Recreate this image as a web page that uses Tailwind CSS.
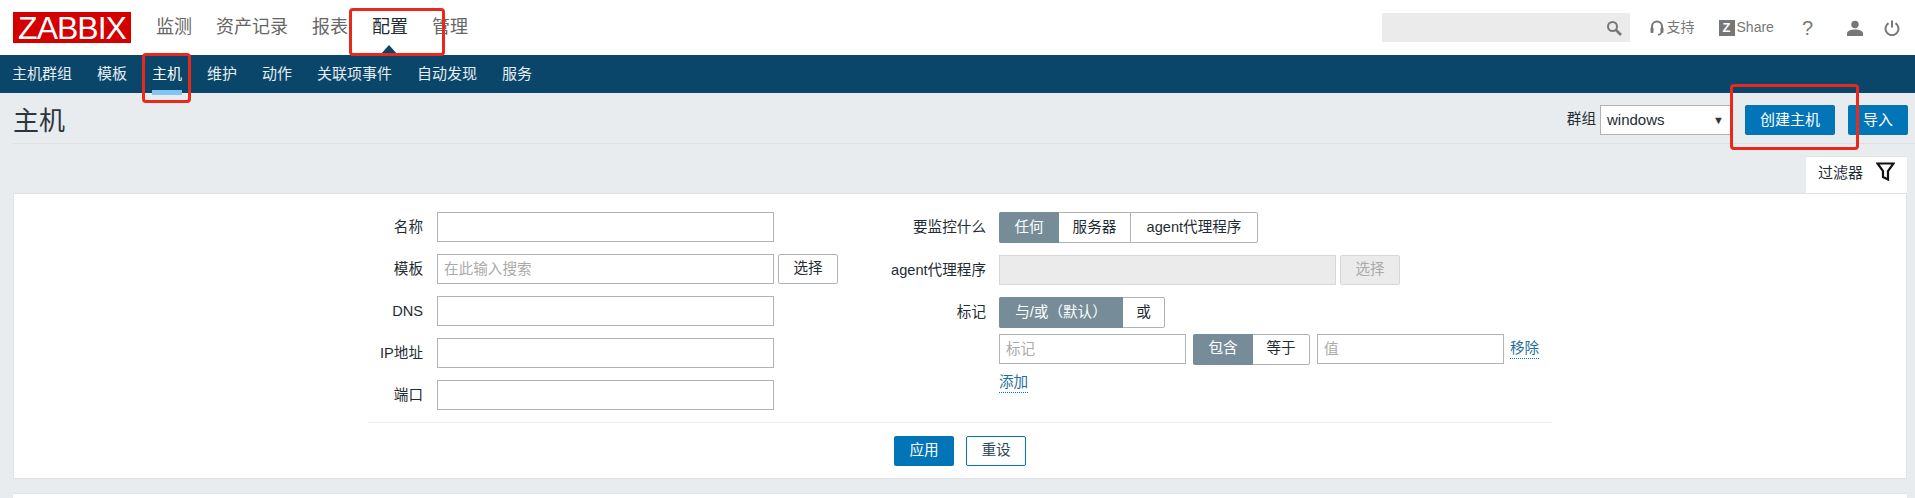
<!DOCTYPE html>
<html lang="zh-CN">
<head>
    <meta charset="UTF-8">
    <meta name="viewport" content="width=device-width, initial-scale=1.0">
    <title>主机</title>
    <script src="https://cdn.jsdelivr.net/npm/@tailwindcss/browser@4"></script>
</head>
<body class="relative h-[498px] overflow-hidden bg-[#e9ecef] text-[14.6px] text-[#1f2c33] font-['Liberation_Sans','Noto_Sans_CJK_SC',sans-serif]">

    <!-- Top bar -->
    <header class="relative flex h-[55px] items-center bg-white pl-[13px] pr-[15px]">
        <div class="flex h-[31px] w-[118px] items-center justify-center bg-[#d40000] text-[32px] tracking-[-1px] text-white">ZABBIX</div>
        <nav class="ml-[25px] flex gap-[24px] text-[18px] text-[#666]">
            <a>监测</a>
            <a>资产记录</a>
            <a>报表</a>
            <a class="text-[#1f2c33]">配置</a>
            <a>管理</a>
        </nav>
        <div class="absolute bottom-0 left-[380px] h-0 w-0 border-x-[9px] border-b-[10px] border-x-transparent border-b-[#0a466a]"></div>

        <div class="ml-auto flex h-[29px] w-[248px] items-center justify-end bg-[#ebebeb] pr-[8px]">
            <svg class="h-[16px] w-[16px] text-[#777]" viewBox="0 0 16 16" fill="none" stroke="currentColor">
                <circle cx="6.5" cy="6.5" r="4.5" stroke-width="2"/>
                <path d="M10 10l5 5" stroke-width="2.6"/>
            </svg>
        </div>
        <div class="ml-[20px] flex items-center text-[14px] text-[#777]">
            <svg class="h-[16px] w-[14px]" viewBox="0 0 14 16" fill="none" stroke="currentColor" stroke-width="2">
                <path d="M2 9V6.5a5 5 0 0 1 10 0V9"/>
                <rect x="0.5" y="7.5" width="3" height="5.500" rx="1" fill="currentColor" stroke="none"/>
                <rect x="10.5" y="7.5" width="3" height="5.500" rx="1" fill="currentColor" stroke="none"/>
                <path d="M11.5 12.5q-.5 2-3.500 2.200" stroke-width="1.500"/>
            </svg>
            <span class="ml-[3px]">支持</span>
        </div>
        <div class="ml-[24px] flex items-center text-[14px] text-[#777]">
            <span class="flex h-[16px] w-[16px] items-center justify-center bg-[#777] text-[13px] leading-none font-bold text-white">Z</span>
            <span class="ml-[2px]">Share</span>
        </div>
        <span class="ml-[28px] text-[20px] text-[#777]">?</span>
        <svg class="ml-[34px] h-[16px] w-[16px] text-[#777]" viewBox="0 0 16 16" fill="currentColor">
            <circle cx="8" cy="4.5" r="3.7"/>
            <path d="M0 16v-2.5C0 10.800 4 9.600 8 9.600s8 1.200 8 3.900V16z"/>
        </svg>
        <svg class="ml-[21px] h-[16px] w-[16px] text-[#777]" viewBox="0 0 16 16" fill="none" stroke="currentColor" stroke-width="2">
            <path d="M4.500 3.200a6.500 6.500 0 1 0 7 0"/>
            <path d="M8 0.500v7"/>
        </svg>
    </header>

    <!-- Second level nav -->
    <nav class="flex h-[38px] items-center gap-[25px] bg-[#0a466a] pl-[12px] text-[15px] text-[#e6eef3]">
        <a>主机群组</a>
        <a>模板</a>
        <a class="relative text-white">主机<span class="absolute -bottom-[10px] left-0 h-[5px] w-full bg-[#7fc4f5]"></span></a>
        <a>维护</a>
        <a>动作</a>
        <a>关联项事件</a>
        <a>自动发现</a>
        <a>服务</a>
    </nav>

    <!-- Page header -->
    <div class="ml-[13px] flex h-[51px] items-center justify-between border-b border-[#dde1e4] pt-[4px] pr-[7px]">
        <h1 class="mt-[2px] text-[26px] leading-none font-normal text-[#2b353b]">主机</h1>
        <div class="flex items-center">
            <span class="mr-[4px]">群组</span>
            <div class="flex h-[30px] w-[131px] items-center justify-between border border-[#b0b4b7] bg-white px-[6px] text-[15px]">
                <span>windows</span>
                <span class="text-[11px] text-[#333]">▼</span>
            </div>
            <button class="ml-[14px] h-[30px] w-[90px] rounded-[2px] bg-[#0275b8] text-[15px] text-white">创建主机</button>
            <button class="ml-[13px] h-[30px] w-[60px] rounded-[2px] bg-[#0275b8] text-[15px] text-white">导入</button>
        </div>
    </div>

    <!-- Filter tab -->
    <div class="mt-[12px] mr-[8px] flex justify-end">
        <div class="flex h-[37px] w-[101px] items-start justify-between border-t border-[#dfe3e6] bg-white pt-[5px] pr-[12px] pl-[12px] text-[15px]">
            <span>过滤器</span>
            <svg class="h-[19px] w-[19px] text-[#111]" viewBox="0 0 19 19" fill="none" stroke="currentColor" stroke-width="2.200">
                <path d="M1.500 1.500h16L12 9v8.500l-5-2.500V9z"/>
            </svg>
        </div>
    </div>

    <!-- Filter card -->
    <section class="mr-[8px] ml-[13px] h-[286px] border border-[#dfe3e6] bg-white">
        <div class="flex h-[228px] pt-[18px] pl-[354px]">

            <div class="flex w-[502px] flex-col gap-[12px]">
                <div class="flex h-[30px] items-center">
                    <label class="w-[55px] pt-[1px] text-right">名称</label>
                    <input class="ml-[14px] h-[30px] w-[337px] border border-[#b0b4b7] bg-white">
                </div>
                <div class="flex h-[30px] items-center">
                    <label class="w-[55px] pt-[1px] text-right">模板</label>
                    <input class="ml-[14px] h-[30px] w-[337px] border border-[#b0b4b7] bg-white px-[6px] placeholder:text-[#aaa]" placeholder="在此输入搜索">
                    <button class="ml-[4px] h-[30px] w-[60px] rounded-[2px] border border-[#b0b4b7] bg-white">选择</button>
                </div>
                <div class="flex h-[30px] items-center">
                    <label class="w-[55px] pt-[1px] text-right">DNS</label>
                    <input class="ml-[14px] h-[30px] w-[337px] border border-[#b0b4b7] bg-white">
                </div>
                <div class="flex h-[30px] items-center">
                    <label class="w-[55px] shrink-0 pt-[1px] text-right whitespace-nowrap">IP地址</label>
                    <input class="ml-[14px] h-[30px] w-[337px] border border-[#b0b4b7] bg-white">
                </div>
                <div class="flex h-[30px] items-center">
                    <label class="w-[55px] pt-[1px] text-right">端口</label>
                    <input class="ml-[14px] h-[30px] w-[337px] border border-[#b0b4b7] bg-white">
                </div>
            </div>

            <div class="flex flex-col">
                <div class="flex h-[31px] items-center">
                    <label class="w-[116px] pt-[1px] text-right">要监控什么</label>
                    <div class="ml-[13px] flex h-[31px] rounded-[2px] border border-[#b0b4b7]">
                        <span class="-my-[1px] -ml-[1px] flex w-[60px] items-center justify-center rounded-l-[2px] bg-[#768d99] text-white">任何</span>
                        <span class="flex w-[72px] items-center justify-center border-r border-[#b0b4b7]">服务器</span>
                        <span class="flex w-[126px] items-center justify-center">agent代理程序</span>
                    </div>
                </div>
                <div class="mt-[12px] flex h-[30px] items-center">
                    <label class="w-[116px] pt-[1px] text-right whitespace-nowrap">agent代理程序</label>
                    <div class="ml-[13px] h-[30px] w-[337px] border border-[#d5d8da] bg-[#ebebeb]"></div>
                    <button class="ml-[4px] h-[30px] w-[60px] rounded-[2px] border border-[#d5d8da] bg-[#ebebeb] text-[#aaa]">选择</button>
                </div>
                <div class="mt-[12px] flex h-[31px] items-center">
                    <label class="w-[116px] pt-[1px] text-right">标记</label>
                    <div class="ml-[13px] flex h-[31px] rounded-[2px] border border-[#b0b4b7]">
                        <span class="-my-[1px] -ml-[1px] flex w-[124px] items-center justify-center rounded-l-[2px] bg-[#768d99] text-white">与/或（默认）</span>
                        <span class="flex w-[41px] items-center justify-center">或</span>
                    </div>
                </div>
                <div class="mt-[6px] ml-[129px] flex h-[30px] items-center">
                    <input class="h-[30px] w-[187px] border border-[#b0b4b7] bg-white px-[6px] placeholder:text-[#aaa]" placeholder="标记">
                    <div class="ml-[7px] flex h-[31px] rounded-[2px] border border-[#b0b4b7]">
                        <span class="-my-[1px] -ml-[1px] flex w-[60px] items-center justify-center rounded-l-[2px] bg-[#768d99] text-white">包含</span>
                        <span class="flex w-[56px] items-center justify-center">等于</span>
                    </div>
                    <input class="ml-[7px] h-[30px] w-[187px] border border-[#b0b4b7] bg-white px-[6px] placeholder:text-[#aaa]" placeholder="值">
                    <a class="ml-[6px] border-b border-dotted border-[#0275b8] leading-[19px] text-[#1f6f9e]">移除</a>
                </div>
                <div class="mt-[9px] ml-[129px] flex">
                    <a class="border-b border-dotted border-[#0275b8] leading-[19px] text-[#1f6f9e]">添加</a>
                </div>
            </div>
        </div>

        <div class="mx-[354px] h-px w-[1184px] bg-[#ebeef0]"></div>

        <div class="mt-[13px] flex justify-center gap-[12px]">
            <button class="h-[30px] w-[60px] rounded-[2px] bg-[#0275b8] text-white">应用</button>
            <button class="h-[30px] w-[60px] rounded-[2px] border border-[#0275b8] bg-white text-[#2b4a5c]">重设</button>
        </div>
    </section>

    <!-- Next card, cut off by the window -->
    <div class="mt-[14px] mr-[8px] ml-[13px] h-[10px] border-t border-[#dfe3e6] bg-white"></div>

    <!-- Red annotation boxes drawn over the screenshot -->
    <div class="absolute top-[8px] left-[349px] h-[48px] w-[96px] rounded-[4px] border-[3px] border-[#e8291c]"></div>
    <div class="absolute top-[53px] left-[142px] h-[50px] w-[49px] rounded-[4px] border-[3px] border-[#e8291c]"></div>
    <div class="absolute top-[84px] left-[1730px] h-[66px] w-[129px] rounded-[4px] border-[3px] border-[#e8291c]"></div>
</body>
</html>
